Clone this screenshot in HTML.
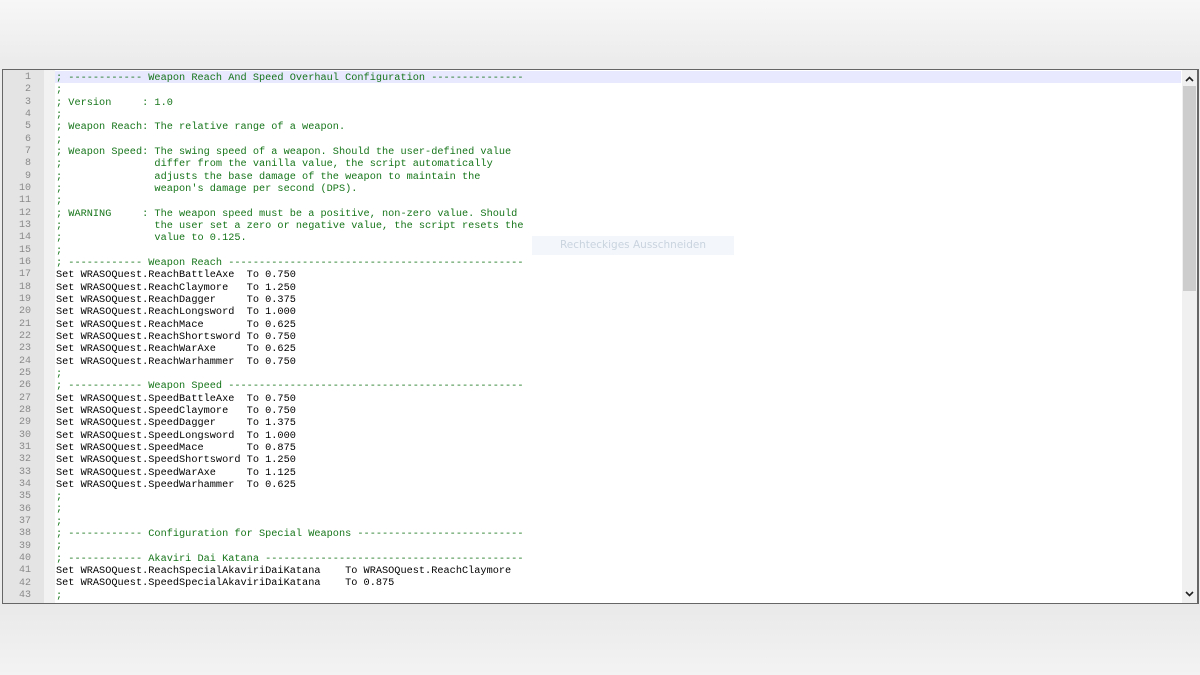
<!DOCTYPE html>
<html><head><meta charset="utf-8"><style>
html,body{margin:0;padding:0;}
body{width:1200px;height:675px;position:relative;overflow:hidden;background:linear-gradient(#f7f7f7,#ececec 60px,#ececec);font-family:"Liberation Mono",monospace;}
#bottom{position:absolute;left:0;top:604px;width:1200px;height:71px;background:linear-gradient(#e9e9e9,#f3f3f3);}
#box{position:absolute;left:2px;top:69px;width:1194px;height:533px;border:1px solid #666;border-right:2px solid #666;background:#fff;overflow:hidden;}
#gut{position:absolute;left:0;top:0;width:41px;height:100%;background:#e4e4e4;}
#fold{position:absolute;left:41px;top:0;width:11px;height:100%;background:#f2f2f2;}
#hl{position:absolute;left:52px;top:1px;width:1126px;height:12px;background:#e8e8ff;}
.ln{position:absolute;left:0;width:28px;text-align:right;color:#8a8a8a;font-size:10px;line-height:12.33px;}
.tx{position:absolute;left:53px;font-size:10.25px;line-height:12.33px;white-space:pre;color:#000;}
.c{color:#16751a;}
#sb{position:absolute;left:1179px;top:0;width:15px;height:100%;background:#f0f0f0;}
#thumb{position:absolute;left:1180px;top:16px;width:13px;height:205px;background:#cdcdcd;}
#tip{position:absolute;left:532px;top:236px;width:202px;height:19px;background:#f3f7fc;color:#c9d3de;font-family:"DejaVu Sans",sans-serif;font-size:10.5px;line-height:19px;text-align:center;}
</style></head><body>
<div id="box">
<div id="gut"></div><div id="fold"></div><div id="hl"></div>
<div id="sb"></div><div id="thumb"></div>
<svg style="position:absolute;left:1182px;top:6px" width="9" height="6"><path d="M1 5 L4.5 1.5 L8 5" stroke="#222" stroke-width="1.6" fill="none"/></svg>
<svg style="position:absolute;left:1182px;top:521px" width="9" height="6"><path d="M1 1 L4.5 4.5 L8 1" stroke="#222" stroke-width="1.6" fill="none"/></svg>
</div>
<div id="bottom"></div>
<div id="tip">Rechteckiges Ausschneiden</div>
<div style="position:absolute;left:3px;top:72px;">
<div class="ln" style="top:0">1</div><div class="ln" style="top:12.33px">2</div><div class="ln" style="top:24.66px">3</div><div class="ln" style="top:36.99px">4</div><div class="ln" style="top:49.32px">5</div><div class="ln" style="top:61.65px">6</div><div class="ln" style="top:73.98px">7</div><div class="ln" style="top:86.31px">8</div><div class="ln" style="top:98.64px">9</div><div class="ln" style="top:110.97px">10</div><div class="ln" style="top:123.3px">11</div><div class="ln" style="top:135.63px">12</div><div class="ln" style="top:147.96px">13</div><div class="ln" style="top:160.29px">14</div><div class="ln" style="top:172.62px">15</div><div class="ln" style="top:184.95px">16</div><div class="ln" style="top:197.28px">17</div><div class="ln" style="top:209.61px">18</div><div class="ln" style="top:221.94px">19</div><div class="ln" style="top:234.27px">20</div><div class="ln" style="top:246.6px">21</div><div class="ln" style="top:258.93px">22</div><div class="ln" style="top:271.26px">23</div><div class="ln" style="top:283.59px">24</div><div class="ln" style="top:295.92px">25</div><div class="ln" style="top:308.25px">26</div><div class="ln" style="top:320.58px">27</div><div class="ln" style="top:332.91px">28</div><div class="ln" style="top:345.24px">29</div><div class="ln" style="top:357.57px">30</div><div class="ln" style="top:369.9px">31</div><div class="ln" style="top:382.23px">32</div><div class="ln" style="top:394.56px">33</div><div class="ln" style="top:406.89px">34</div><div class="ln" style="top:419.22px">35</div><div class="ln" style="top:431.55px">36</div><div class="ln" style="top:443.88px">37</div><div class="ln" style="top:456.21px">38</div><div class="ln" style="top:468.54px">39</div><div class="ln" style="top:480.87px">40</div><div class="ln" style="top:493.2px">41</div><div class="ln" style="top:505.53px">42</div><div class="ln" style="top:517.86px">43</div>
<div class="tx" style="top:0"><span class="c">; ------------ Weapon Reach And Speed Overhaul Configuration ---------------
;
; Version     : 1.0
;
; Weapon Reach: The relative range of a weapon.
;
; Weapon Speed: The swing speed of a weapon. Should the user-defined value
;               differ from the vanilla value, the script automatically
;               adjusts the base damage of the weapon to maintain the
;               weapon's damage per second (DPS).
;
; WARNING     : The weapon speed must be a positive, non-zero value. Should
;               the user set a zero or negative value, the script resets the
;               value to 0.125.
;
; ------------ Weapon Reach ------------------------------------------------</span>
Set WRASOQuest.ReachBattleAxe  To 0.750
Set WRASOQuest.ReachClaymore   To 1.250
Set WRASOQuest.ReachDagger     To 0.375
Set WRASOQuest.ReachLongsword  To 1.000
Set WRASOQuest.ReachMace       To 0.625
Set WRASOQuest.ReachShortsword To 0.750
Set WRASOQuest.ReachWarAxe     To 0.625
Set WRASOQuest.ReachWarhammer  To 0.750
<span class="c">;
; ------------ Weapon Speed ------------------------------------------------</span>
Set WRASOQuest.SpeedBattleAxe  To 0.750
Set WRASOQuest.SpeedClaymore   To 0.750
Set WRASOQuest.SpeedDagger     To 1.375
Set WRASOQuest.SpeedLongsword  To 1.000
Set WRASOQuest.SpeedMace       To 0.875
Set WRASOQuest.SpeedShortsword To 1.250
Set WRASOQuest.SpeedWarAxe     To 1.125
Set WRASOQuest.SpeedWarhammer  To 0.625
<span class="c">;
;
;
; ------------ Configuration for Special Weapons ---------------------------
;
; ------------ Akaviri Dai Katana ------------------------------------------</span>
Set WRASOQuest.ReachSpecialAkaviriDaiKatana    To WRASOQuest.ReachClaymore
Set WRASOQuest.SpeedSpecialAkaviriDaiKatana    To 0.875
<span class="c">;</span></div>
</div>
</body></html>
